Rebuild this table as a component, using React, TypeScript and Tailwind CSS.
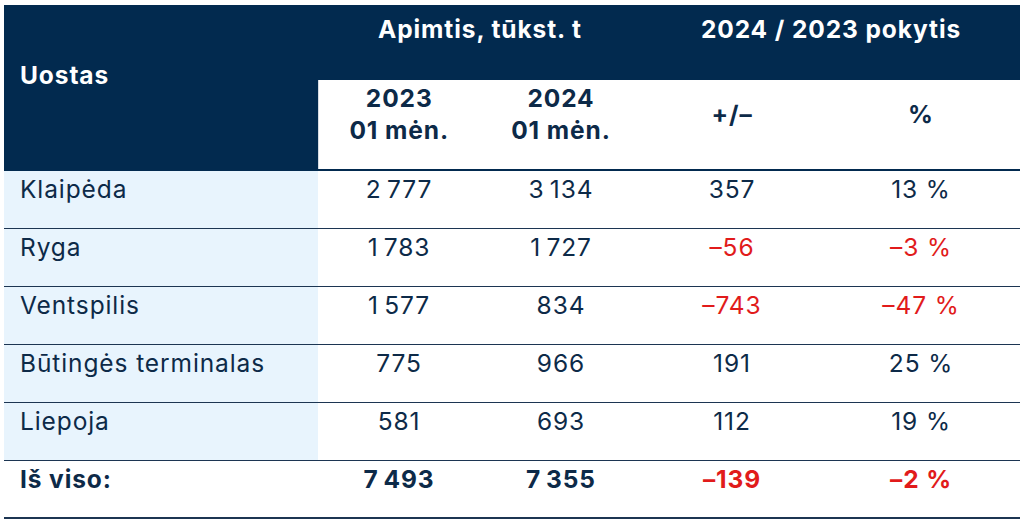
const rows = [
  { port: 'Klaipėda', y2023: '2\u2009777', y2024: '3\u2009134', diff: '357', pct: '13 %', neg: false },
  { port: 'Ryga', y2023: '1\u2009783', y2024: '1\u2009727', diff: '–56', pct: '–3 %', neg: true },
  { port: 'Ventspilis', y2023: '1\u2009577', y2024: '834', diff: '–743', pct: '–47 %', neg: true },
  { port: 'Būtingės terminalas', y2023: '775', y2024: '966', diff: '191', pct: '25 %', neg: false },
  { port: 'Liepoja', y2023: '581', y2024: '693', diff: '112', pct: '19 %', neg: false },
];

export default function App() {
  return (
    <div className="w-[1024px] h-[526px] bg-white pt-[5px] pl-1" style={{ fontFamily: 'Inter, "Liberation Sans", sans-serif' }}>
      <table className="w-[1016px] border-collapse table-fixed text-[24.5px] leading-8 tracking-[0.9px] text-[#0d2a48]">
        <colgroup>
          <col className="w-[314px]" />
          <col className="w-[162px]" />
          <col className="w-[162px]" />
          <col className="w-[180px]" />
          <col className="w-[198px]" />
        </colgroup>
        <thead>
          <tr className="h-[75px]">
            <th rowSpan={2} className="bg-[#022a4f] text-white text-left font-bold align-top pl-4 pt-[54px] border-b-2 border-[#022a4f]">
              Uostas
            </th>
            <th colSpan={2} className="bg-[#022a4f] text-white font-bold align-top pt-[8px]">
              Apimtis, tūkst. t
            </th>
            <th colSpan={2} className="bg-[#022a4f] text-white font-bold align-top pt-[8px]">
              2024 / 2023 pokytis
            </th>
          </tr>
          <tr className="h-[90px]">
            <th className="font-bold align-middle pb-[22px] border-l border-[#d5dbe2] border-b-2 border-b-[#022a4f]">
              2023
              <br />
              01 mėn.
            </th>
            <th className="font-bold align-middle pb-[22px] border-b-2 border-b-[#022a4f]">
              2024
              <br />
              01 mėn.
            </th>
            <th className="font-bold align-middle pb-[22px] border-b-2 border-b-[#022a4f]">+/–</th>
            <th className="font-bold align-middle pb-[22px] border-b-2 border-b-[#022a4f]">%</th>
          </tr>
        </thead>
        <tbody>
          {rows.map((r) => (
            <tr key={r.port} className="h-[58px] border-b-[1.5px] border-[#1c3552]">
              <td className="bg-[#e8f4fd] align-top pl-4 pt-[2px]">{r.port}</td>
              <td className="text-center align-top pt-[2px]">{r.y2023}</td>
              <td className="text-center align-top pt-[2px]">{r.y2024}</td>
              <td className={`text-center align-top pt-[2px] ${r.neg ? 'text-[#e11b1b]' : ''}`}>{r.diff}</td>
              <td className={`text-center align-top pt-[2px] ${r.neg ? 'text-[#e11b1b]' : ''}`}>{r.pct}</td>
            </tr>
          ))}
          <tr className="h-[58px] border-b-2 border-[#1c3552] font-bold">
            <td className="align-top pl-4 pt-[2px]">Iš viso:</td>
            <td className="text-center align-top pt-[2px]">7{'\u2009'}493</td>
            <td className="text-center align-top pt-[2px]">7{'\u2009'}355</td>
            <td className="text-center align-top pt-[2px] text-[#e11b1b]">–139</td>
            <td className="text-center align-top pt-[2px] text-[#e11b1b]">–2 %</td>
          </tr>
        </tbody>
      </table>
    </div>
  );
}
